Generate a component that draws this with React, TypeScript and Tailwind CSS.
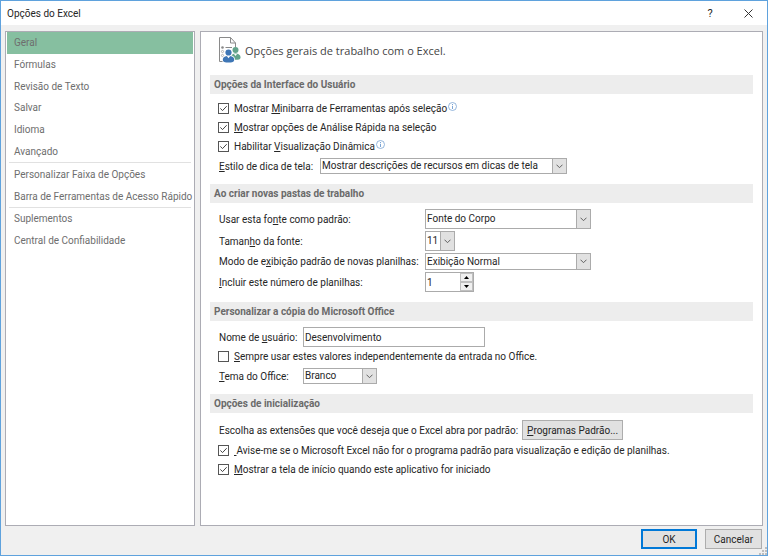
import type { ReactNode } from "react";

type SelectProps = {
  id: string;
  value: string;
  className: string;
};

const navGroups = [
  {
    size: "h-[130px]",
    items: ["Geral", "Fórmulas", "Revisão de Texto", "Salvar", "Idioma", "Avançado"],
  },
  {
    size: "h-[44px]",
    items: ["Personalizar Faixa de Opções", "Barra de Ferramentas de Acesso Rápido"],
  },
  { size: "h-[43px]", items: ["Suplementos", "Central de Confiabilidade"] },
];

function Select({ id, value, className }: SelectProps) {
  return (
    <div className={`relative shrink-0 ${className}`}>
      <select
        id={id}
        defaultValue={value}
        className="block h-full w-full appearance-none border border-[#ababab] bg-white pl-px text-[10px] leading-none text-[#262626] outline-none"
      >
        <option>{value}</option>
      </select>
      <span className="pointer-events-none absolute inset-y-0 right-0 flex w-[15px] items-center justify-center border border-[#ababab] bg-[#e1e1e1]">
        <svg width="7" height="5" viewBox="0 0 7 5" fill="none" stroke="#606060">
          <path d="M0.5 0.7 3.5 3.7 6.5 0.7" />
        </svg>
      </span>
    </div>
  );
}

function Check({
  id,
  checked = false,
  info = false,
  children,
}: {
  id: string;
  checked?: boolean;
  info?: boolean;
  children: ReactNode;
}) {
  return (
    <div className="flex h-[19px] items-center pl-2">
      <span className="grid shrink-0">
        <input
          id={id}
          type="checkbox"
          defaultChecked={checked}
          className="peer col-start-1 row-start-1 size-[11px] appearance-none border border-[#555] bg-white"
        />
        <svg
          viewBox="0 0 11 11"
          fill="none"
          stroke="#444"
          className="pointer-events-none invisible col-start-1 row-start-1 size-[11px] peer-checked:visible"
        >
          <path d="M2.4 5.4 4.5 7.6 8.7 3.2" />
        </svg>
      </span>
      <label htmlFor={id} className="pl-[5px] whitespace-pre">
        {children}
      </label>
      {info && (
        <svg width="9" height="9" viewBox="0 0 9 9" fill="none" stroke="#7ba4d4" strokeWidth="0.8" className="mb-1 ml-px">
          <circle cx="4.5" cy="4.5" r="4" />
          <path d="M4.5 3.8V7M4.5 2v1" strokeWidth="1" />
        </svg>
      )}
    </div>
  );
}

function Section({ title, className, children }: { title: string; className: string; children: ReactNode }) {
  return (
    <section>
      <h2 className="flex h-[19px] items-center bg-[#ededed] pl-1 font-bold text-[#6a6a6a]">{title}</h2>
      <div className={className}>{children}</div>
    </section>
  );
}

function PageIcon() {
  return (
    <svg width="23" height="26" viewBox="0 0 23 26" fill="none" className="shrink-0">
      <path d="M5 24.5H1.5V.5h11l5 5.500V10" fill="#fff" stroke="#8a8a8a" />
      <path d="M12.500.5V6h5" stroke="#8a8a8a" />
      <circle cx="4.500" cy="10.500" r="1.300" fill="#888" />
      <circle cx="4.500" cy="14.500" r="1.100" stroke="#999" strokeWidth=".7" />
      <circle cx="4.500" cy="18.500" r="1.100" stroke="#999" strokeWidth=".7" />
      <path d="M7.500 10.500H14" stroke="#888" />
      <circle cx="17.500" cy="13" r="3" fill="#62a48b" />
      <path d="M13 20.500c0-3 2-4 4.500-4s5 1 5 4c0 2-2 2.300-5 2.300s-4.500-.3-4.500-2.300Z" fill="#62a48b" />
      <path d="m16 17 1.500 2 1.500-2Z" fill="#fff" />
      <circle cx="10.500" cy="15.500" r="3.800" fill="#fff" />
      <path d="M4 23c0-3.500 2.500-5 6.500-5s6.500 1.500 6.500 5c0 2.500-2.500 3-6.500 3S4 25.500 4 23Z" fill="#fff" />
      <circle cx="10.500" cy="15.500" r="3.100" fill="#3e76b5" />
      <path d="M4.800 23c0-3 2-4 5.700-4s5.700 1 5.700 4c0 2-2 2.500-5.700 2.500S4.800 25 4.800 23Z" fill="#3e76b5" />
      <path d="m8.800 19 1.700 2.300 1.700-2.300Z" fill="#fff" />
    </svg>
  );
}

export default function App() {
  return (
    <div className="flex min-h-screen flex-col border border-[#5fa2dd] bg-[#f0f0f0] font-['Roboto','Liberation_Sans',sans-serif] text-[10px] leading-[17px] text-[#262626]">
      <header className="flex h-6 items-center bg-white pl-[6px]">
        <h1 className="flex-1">Opções do Excel</h1>
        <button type="button" aria-label="Ajuda" className="flex h-6 w-[38px] items-center justify-center text-[11px]">
          ?
        </button>
        <button type="button" aria-label="Fechar" className="flex h-6 w-[38px] items-center justify-center">
          <svg width="9" height="9" viewBox="0 0 9 9" stroke="#333">
            <path d="m.5.5 8 8M8.500.5l-8 8" />
          </svg>
        </button>
      </header>

      <div className="flex flex-1 gap-[5px] px-1 pt-[6px]">
        <nav className="w-[190px] shrink-0 border border-[#acacb4] bg-white text-[#6e6e6e]">
          {navGroups.map((group, g) => (
            <div key={group.size}>
              {g > 0 && <hr className="mx-[3px] border-[#e1e1e1]" />}
              <ul className={`flex flex-col ${group.size}`}>
                {group.items.map((item) => (
                  <li key={item} className="flex flex-1">
                    <a
                      href="#"
                      className={`flex flex-1 items-center whitespace-nowrap ${
                        item === "Geral" ? "mx-px bg-[#86bfa0] pl-[7px]" : "pl-2"
                      }`}
                    >
                      {item}
                    </a>
                  </li>
                ))}
              </ul>
            </div>
          ))}
        </nav>

        <main className="min-w-0 flex-1 border border-[#acacb4] bg-white px-[9px]">
          <div className="flex h-[43px] items-center gap-1 pb-[7px] pl-2 font-['Open_Sans','Noto_Sans',sans-serif] text-[11px] text-[#444]">
            <PageIcon />
            <p>Opções gerais de trabalho com o Excel.</p>
          </div>

          <Section title="Opções da Interface do Usuário" className="pt-[5px] pb-2">
            <Check id="mini" checked info>
              Mostrar <u>M</u>inibarra de Ferramentas após seleção
            </Check>
            <Check id="analise" checked>
              <u>M</u>ostrar opções de Análise Rápida na seleção
            </Check>
            <Check id="dinamica" checked info>
              Habilitar <u>V</u>isualização Dinâmica
            </Check>
            <div className="flex h-5 items-center pl-[9px]">
              <label htmlFor="dica" className="w-[101px] whitespace-nowrap">
                <u>E</u>stilo de dica de tela:
              </label>
              <Select id="dica" value="Mostrar descrições de recursos em dicas de tela" className="h-4 w-[247px]" />
            </div>
          </Section>

          <Section
            title="Ao criar novas pastas de trabalho"
            className="grid grid-cols-[206px_1fr] items-center gap-y-0.5 pt-[6px] pb-[10px] pl-[9px]"
          >
            <label htmlFor="fonte">
              Usar esta fo<u>n</u>te como padrão:
            </label>
            <Select id="fonte" value="Fonte do Corpo" className="h-5 w-[166px]" />
            <label htmlFor="tamanho">
              Taman<u>h</u>o da fonte:
            </label>
            <Select id="tamanho" value="11" className="h-5 w-[30px]" />
            <label htmlFor="modo" className="whitespace-nowrap">
              Modo de e<u>x</u>ibição padrão de novas planilhas:
            </label>
            <Select id="modo" value="Exibição Normal" className="h-[17px] w-[166px]" />
            <label htmlFor="planilhas">
              <u>I</u>ncluir este número de planilhas:
            </label>
            <div className="flex h-5 w-[49px] border border-[#ababab] bg-white">
              <input
                id="planilhas"
                type="text"
                inputMode="numeric"
                defaultValue="1"
                className="w-0 flex-1 pl-px outline-none"
              />
              <div className="flex w-[13px] flex-col">
                <button type="button" aria-label="Aumentar" className="flex flex-1 items-center justify-center border border-[#c0c0c0] bg-[#f0f0f0]">
                  <svg width="5" height="3" viewBox="0 0 5 3"><path d="M0 3 2.500 0 5 3Z" /></svg>
                </button>
                <button type="button" aria-label="Diminuir" className="flex flex-1 items-center justify-center border border-[#c0c0c0] bg-[#f0f0f0]">
                  <svg width="5" height="3" viewBox="0 0 5 3"><path d="M0 0 2.500 3 5 0Z" /></svg>
                </button>
              </div>
            </div>
          </Section>

          <Section title="Personalizar a cópia do Microsoft Office" className="pt-[6px] pb-2">
            <div className="flex h-5 items-center pl-[9px]">
              <label htmlFor="usuario" className="w-[84px] whitespace-nowrap">
                Nome de <u>u</u>suário:
              </label>
              <input
                id="usuario"
                type="text"
                defaultValue="Desenvolvimento"
                className="h-5 w-[182px] border border-[#ababab] pl-px outline-none"
              />
            </div>
            <Check id="sempre">
              <u>S</u>empre usar estes valores independentemente da entrada no Office.
            </Check>
            <div className="flex h-5 items-center pl-[9px]">
              <label htmlFor="tema" className="w-[84px] whitespace-nowrap">
                <u>T</u>ema do Office:
              </label>
              <Select id="tema" value="Branco" className="h-4 w-[74px]" />
            </div>
          </Section>

          <Section title="Opções de inicialização" className="pt-[7px]">
            <div className="mb-px flex h-5 items-center gap-1 pl-[9px]">
              <span className="whitespace-nowrap">Escolha as extensões que você deseja que o Excel abra por padrão:</span>
              <button type="button" className="h-5 w-[101px] shrink-0 border border-[#adadad] bg-[#e1e1e1] whitespace-nowrap">
                <u>P</u>rogramas Padrão...
              </button>
            </div>
            <Check id="avise" checked>
              <u> </u>Avise-me se o Microsoft Excel não for o programa padrão para visualização e edição de planilhas.
            </Check>
            <Check id="inicio" checked>
              <u>M</u>ostrar a tela de início quando este aplicativo for iniciado
            </Check>
          </Section>
        </main>
      </div>

      <footer className="relative flex justify-end gap-2 pt-[3px] pr-[5px] pb-[6px]">
        <button type="button" className="h-5 w-14 border-2 border-[#0078d7] bg-[#e1e1e1]">
          OK
        </button>
        <button type="button" className="h-5 w-[57px] border border-[#adadad] bg-[#e1e1e1]">
          Cancelar
        </button>
        <svg width="8" height="8" viewBox="0 0 8 8" fill="#bdbdbd" className="absolute right-0 bottom-0">
          <path d="M6 0h2v2H6zM3 3h2v2H3zM6 3h2v2H6zM0 6h2v2H0zM3 6h2v2H3zM6 6h2v2H6z" />
        </svg>
      </footer>
    </div>
  );
}
